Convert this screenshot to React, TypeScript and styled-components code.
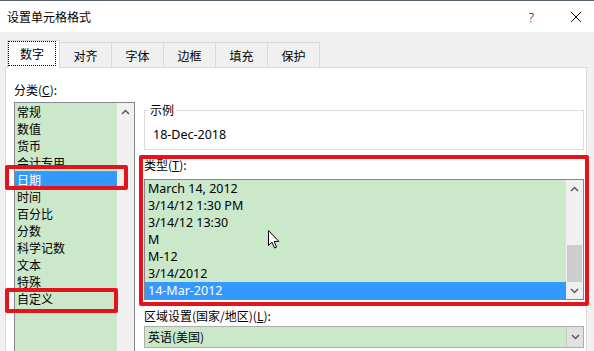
import React from "react";
import styled, { createGlobalStyle } from "styled-components";

const GlobalStyle = createGlobalStyle`
  html, body {
    margin: 0;
    padding: 0;
    width: 594px;
    height: 351px;
    overflow: hidden;
    background: #f0f0f0;
  }
  body {
    font-family: "Noto Sans", "Noto Sans CJK SC", sans-serif;
    font-size: 12px;
    color: #000;
  }
`;

const categories = ["常规", "数值", "货币", "会计专用", "日期", "时间", "百分比", "分数", "科学记数", "文本", "特殊", "自定义"];
const types = ["March 14, 2012", "3/14/12 1:30 PM", "3/14/12 13:30", "M", "M-12", "3/14/2012", "14-Mar-2012"];
const tabs = ["数字", "对齐", "字体", "边框", "填充", "保护"];

function Chevron({ down }: { down?: boolean }) {
    return (
        <svg width="9" height="6" viewBox="0 0 9 6">
            <polyline
                points={down ? "1,1 4.5,4.5 8,1" : "1,5 4.5,1.5 8,5"}
                fill="none"
                stroke="#5a5a5a"
                strokeWidth="1.5"
            />
        </svg>
    );
}

export default function App() {
    return (
        <Window>
            <GlobalStyle />
            <TitleBar>
                <TitleText>设置单元格格式</TitleText>
                <HelpGlyph>?</HelpGlyph>
                <svg width="12" height="12" viewBox="0 0 12 12">
                    <path d="M1 1 L11 11 M11 1 L1 11" stroke="#111" strokeWidth="1" />
                </svg>
            </TitleBar>

            <Body>
                <TabRow>
                    {tabs.map((t, i) =>
                        i === 0 ? (
                            <ActiveTab key={t}>
                                <FocusRing>{t}</FocusRing>
                            </ActiveTab>
                        ) : (
                            <Tab key={t}>{t}</Tab>
                        )
                    )}
                </TabRow>

                <Panel>
                    <LeftCol>
                        <Label>
                            分类(<u>C</u>):
                        </Label>
                        <CategoryList>
                            <Items>
                                {categories.map((c) => (
                                    <Item key={c} $selected={c === "日期"}>
                                        {c}
                                        {c === "日期" && <Mark $t={-6} $r={-11} $b={-2} $l={-10} />}
                                        {c === "自定义" && <Mark $t={-2} $r={-1} $b={-6} $l={-10} />}
                                    </Item>
                                ))}
                            </Items>
                            <ScrollBar>
                                <ArrowButton>
                                    <Chevron />
                                </ArrowButton>
                            </ScrollBar>
                        </CategoryList>
                    </LeftCol>

                    <RightCol>
                        <GroupBox>
                            <Legend>示例</Legend>
                            <Sample>18-Dec-2018</Sample>
                        </GroupBox>

                        <TypeBlock>
                            <TypeLabel>
                                类型(<u>T</u>):
                            </TypeLabel>
                            <TypeList>
                                <Items>
                                    {types.map((t) => (
                                        <TypeItem key={t} $selected={t === "14-Mar-2012"}>
                                            {t}
                                        </TypeItem>
                                    ))}
                                </Items>
                                <ScrollBar>
                                    <ArrowButton>
                                        <Chevron />
                                    </ArrowButton>
                                    <Track>
                                        <Thumb />
                                    </Track>
                                    <ArrowButton>
                                        <Chevron down />
                                    </ArrowButton>
                                </ScrollBar>
                                <Cursor width="12" height="19" viewBox="0 0 12 19">
                                    <path
                                        d="M0.5 0.5 L0.5 15.5 L4 12.2 L6.6 18 L8.6 17.1 L6.1 11.4 L10.8 11.4 Z"
                                        fill="#fff"
                                        stroke="#000"
                                        strokeWidth="1"
                                    />
                                </Cursor>
                            </TypeList>
                            <Mark $t={-1} $r={-5} $b={-6} $l={-5} />
                        </TypeBlock>

                        <RegionLabel>
                            区域设置(国家/地区)(<u>L</u>):
                        </RegionLabel>
                        <Combo>
                            <ComboText>英语(美国)</ComboText>
                            <ComboButton>
                                <Chevron down />
                            </ComboButton>
                        </Combo>
                    </RightCol>
                </Panel>
            </Body>
        </Window>
    );
}

const Window = styled.div`
    width: 594px;
    height: 351px;
    display: flex;
    flex-direction: column;
    overflow: hidden;
`;

const TitleBar = styled.div`
    height: 31px;
    border-top: 1px solid #56616c;
    background: #ffffff;
    display: flex;
    align-items: center;
    padding: 0 12px 0 7px;
    font-family: "Noto Sans CJK SC", sans-serif;
`;

const TitleText = styled.div`
    flex: 1;
    font-size: 12px;
`;

const HelpGlyph = styled.div`
    font-family: "Noto Sans", sans-serif;
    font-size: 13px;
    font-weight: 300;
    margin-right: 36px;
`;

const Body = styled.div`
    flex: 1;
    display: flex;
    flex-direction: column;
    padding: 8px 7px 0 5px;
    min-height: 0;
`;

const TabRow = styled.div`
    height: 27px;
    display: flex;
    align-items: flex-end;
    padding-left: 2px;
    font-family: "Noto Sans CJK SC", sans-serif;
`;

const Tab = styled.div`
    width: 53px;
    height: 25px;
    box-sizing: border-box;
    border: 1px solid #d9d9d9;
    border-bottom: none;
    margin-left: -1px;
    background: #f0f0f0;
    display: flex;
    align-items: center;
    justify-content: center;
`;

const ActiveTab = styled.div`
    width: 53px;
    height: 28px;
    box-sizing: border-box;
    border: 1px solid #d9d9d9;
    border-bottom: none;
    margin-bottom: -1px;
    background: #ffffff;
    position: relative;
    z-index: 1;
    display: flex;
    padding: 0 3px 2px 0;
`;

const FocusRing = styled.div`
    flex: 1;
    border: 1px dotted #000;
    display: flex;
    align-items: center;
    justify-content: center;
`;

const Panel = styled.div`
    flex: 1;
    background: #ffffff;
    border: 1px solid #d9d9d9;
    border-bottom: none;
    display: flex;
    gap: 9px;
    padding: 13px 2px 0 8px;
    min-height: 0;
`;

const LeftCol = styled.div`
    width: 121px;
    display: flex;
    flex-direction: column;
`;

const Label = styled.div`
    height: 17px;
    line-height: 17px;
    margin-bottom: 4px;
    font-family: "Noto Sans CJK SC", sans-serif;
`;

const CategoryList = styled.div`
    flex: 1;
    display: flex;
    border: 1px solid #828790;
    border-bottom: none;
    font-family: "Noto Sans CJK SC", sans-serif;
`;

const Items = styled.div`
    flex: 1;
    background: #cbe8cb;
    display: flex;
    flex-direction: column;
`;

const Item = styled.div<{ $selected?: boolean }>`
    position: relative;
    height: 17px;
    line-height: 17px;
    padding-left: 2px;
    white-space: nowrap;
    background: ${(p) => (p.$selected ? "#3399ff" : "transparent")};
    color: ${(p) => (p.$selected ? "#ffffff" : "#000")};
`;

const TypeItem = styled(Item)`
    padding-left: 3px;
    font-family: "Noto Sans", sans-serif;
    font-size: 12.5px;
`;

const Mark = styled.div<{ $t: number; $r: number; $b: number; $l: number }>`
    position: absolute;
    top: ${(p) => p.$t}px;
    right: ${(p) => p.$r}px;
    bottom: ${(p) => p.$b}px;
    left: ${(p) => p.$l}px;
    border: 4px solid #e3141c;
    border-radius: 2px;
    pointer-events: none;
    z-index: 2;
`;

const ScrollBar = styled.div`
    width: 17px;
    background: #f0f0f0;
    display: flex;
    flex-direction: column;
`;

const ArrowButton = styled.div`
    height: 17px;
    display: flex;
    align-items: center;
    justify-content: center;
`;

const Track = styled.div`
    flex: 1;
    display: flex;
    align-items: flex-end;
    padding: 0 1px;
`;

const Thumb = styled.div`
    flex: 1;
    height: 37px;
    background: #cdcdcd;
`;

const RightCol = styled.div`
    width: 440px;
    margin-top: 22px;
    display: flex;
    flex-direction: column;
`;

const GroupBox = styled.fieldset`
    margin: 0;
    padding: 0 8px;
    border: 1px solid #dcdcdc;
    min-inline-size: 0;
`;

const Legend = styled.legend`
    padding: 0 2px;
    margin-left: -5px;
    line-height: 14px;
    font-family: "Noto Sans CJK SC", sans-serif;
`;

const Sample = styled.div`
    line-height: 17px;
    font-size: 12.5px;
    padding: 9px 0 6px 0;
`;

const TypeBlock = styled.div`
    position: relative;
    margin-top: 6px;
    display: flex;
    flex-direction: column;
`;

const TypeLabel = styled(Label)`
    margin-bottom: 6px;
`;

const TypeList = styled.div`
    position: relative;
    display: flex;
    border: 1px solid #828790;
`;

const Cursor = styled.svg`
    position: absolute;
    left: 123px;
    top: 50px;
`;

const RegionLabel = styled(Label)`
    margin: 7px 0 2px;
`;

const Combo = styled.div`
    height: 22px;
    box-sizing: border-box;
    border: 1px solid #adadad;
    background: #cbe8cb;
    display: flex;
    font-family: "Noto Sans CJK SC", sans-serif;
`;

const ComboText = styled.div`
    flex: 1;
    line-height: 20px;
    padding-left: 3px;
`;

const ComboButton = styled.div`
    width: 16px;
    background: #e1e1e1;
    border-left: 1px solid #c8c8c8;
    display: flex;
    align-items: center;
    justify-content: center;
`;
